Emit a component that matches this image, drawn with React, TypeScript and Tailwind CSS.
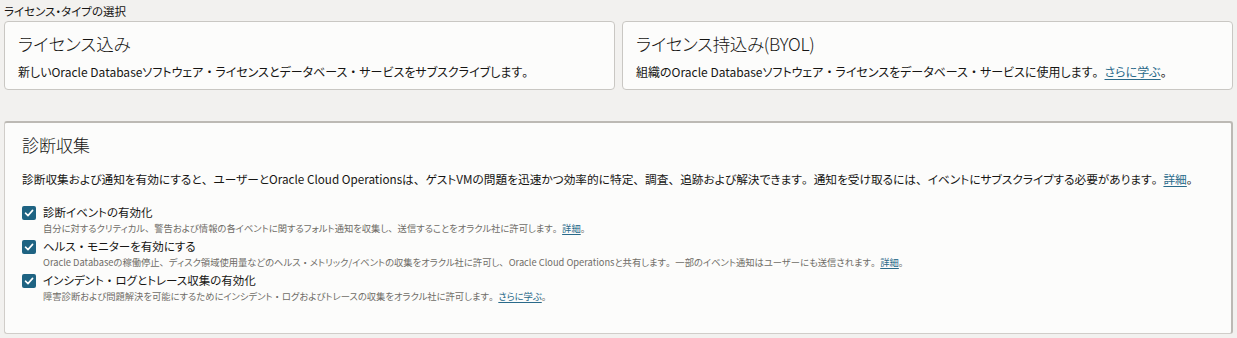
import React from "react";

const font = {
  fontFamily: '"Noto Sans CJK JP", "Noto Sans", sans-serif',
};

function T({ children }: { children: string }) {
  const parts = children.split(/([、。・])/);
  return (
    <>
      {parts.map((p, i) =>
        /^[、。・]$/.test(p) ? (
          <span key={i} className="[font-feature-settings:normal]">
            {p}
          </span>
        ) : (
          <React.Fragment key={i}>{p}</React.Fragment>
        )
      )}
    </>
  );
}

function Check() {
  return (
    <span className="flex h-[14px] w-[14px] shrink-0 items-center justify-center rounded-[2px] bg-[#1e6382]">
      <svg width="10" height="10" viewBox="0 0 10 10" fill="none">
        <path d="M1.5 5.2 L4 7.6 L8.6 2.4" stroke="white" strokeWidth="1.6" strokeLinecap="round" strokeLinejoin="round" />
      </svg>
    </span>
  );
}

function Link({ children }: { children: string }) {
  return (
    <a className="text-[#2a6a8a] underline underline-offset-2">
      <T>{children}</T>
    </a>
  );
}

function Opt({ title, desc }: { title: string; desc: React.ReactNode }) {
  return (
    <div className="flex gap-[7px]">
      <div className="pt-[2px]">
        <Check />
      </div>
      <div className="flex flex-col">
        <div className="text-[11.5px] leading-[16px] text-[#161513]">
          <T>{title}</T>
        </div>
        <div className="mt-[1px] text-[9.3px] leading-[14px] text-[#6f6c67]">{desc}</div>
      </div>
    </div>
  );
}

export default function App() {
  return (
    <div
      className="min-h-[338px] w-[1237px] bg-[#f2f1ef] px-[4px] pt-[2px] [font-feature-settings:'palt']"
      style={font}
    >
      <div className="text-[11.5px] leading-[18px] text-[#161513]">ライセンス・タイプの選択</div>
      <div className="mt-[1px] grid grid-cols-2 gap-[7px]">
        <div className="h-[69px] rounded-[4px] border border-[#c9c7c3] bg-[#fcfcfb] px-[13px] pt-[10px]">
          <div className="text-[17.5px] font-light leading-[24px] text-[#161513]">ライセンス込み</div>
          <div className="mt-[8px] text-[12px] leading-[16px] text-[#161513]">
            <T>新しいOracle Databaseソフトウェア・ライセンスとデータベース・サービスをサブスクライブします。</T>
          </div>
        </div>
        <div className="h-[69px] rounded-[4px] border border-[#c9c7c3] bg-[#fcfcfb] px-[13px] pt-[10px]">
          <div className="text-[17.5px] font-light leading-[24px] tracking-[-0.3px] text-[#161513]">ライセンス持込み(BYOL)</div>
          <div className="mt-[8px] text-[12px] leading-[16px] text-[#161513]">
            <T>組織のOracle Databaseソフトウェア・ライセンスをデータベース・サービスに使用します。</T>
            <Link>さらに学ぶ</Link>
            <T>。</T>
          </div>
        </div>
      </div>
      <div className="mt-[31px] h-[213px] rounded-[3px] border border-t-2 border-r-2 border-[#bcb9b4] border-l-[#d0cdc9] border-b-[#d0cdc9] bg-[#fcfcfb] px-[17px] pt-[9px]">
        <div className="text-[17px] font-light leading-[26px] text-[#161513]">診断収集</div>
        <div className="mt-[13px] text-[11.7px] leading-[16px] text-[#161513]">
          <T>診断収集および通知を有効にすると、ユーザーとOracle Cloud Operationsは、ゲストVMの問題を迅速かつ効率的に特定、調査、追跡および解決できます。通知を受け取るには、イベントにサブスクライブする必要があります。</T>
          <Link>詳細</Link>
          <T>。</T>
        </div>
        <div className="mt-[17px] flex flex-col gap-[3px]">
          <Opt
            title="診断イベントの有効化"
            desc={
              <>
                <T>自分に対するクリティカル、警告および情報の各イベントに関するフォルト通知を収集し、送信することをオラクル社に許可します。</T>
                <Link>詳細</Link>
                <T>。</T>
              </>
            }
          />
          <Opt
            title="ヘルス・モニターを有効にする"
            desc={
              <>
                <T>Oracle Databaseの稼働停止、ディスク領域使用量などのヘルス・メトリック/イベントの収集をオラクル社に許可し、Oracle Cloud Operationsと共有します。一部のイベント通知はユーザーにも送信されます。</T>
                <Link>詳細</Link>
                <T>。</T>
              </>
            }
          />
          <Opt
            title="インシデント・ログとトレース収集の有効化"
            desc={
              <>
                <T>障害診断および問題解決を可能にするためにインシデント・ログおよびトレースの収集をオラクル社に許可します。</T>
                <Link>さらに学ぶ</Link>
                <T>。</T>
              </>
            }
          />
        </div>
      </div>
    </div>
  );
}
